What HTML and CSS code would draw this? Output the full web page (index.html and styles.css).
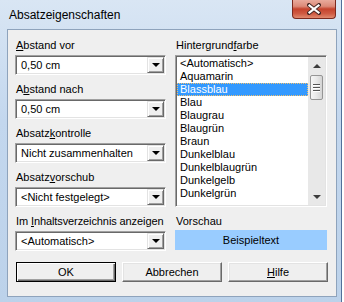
FILE: index.html
```html
<!DOCTYPE html>
<html lang="de">
<head>
    <meta charset="UTF-8">
    <title>Absatzeigenschaften</title>
    <link rel="stylesheet" href="styles.css">
</head>
<body>
    <div class="window">
        <div class="titlebar">
            <span class="title">Absatzeigenschaften</span>
            <div class="close-btn">
                <svg width="14" height="12" viewBox="0 0 14 12">
                    <path d="M2 2 L12 10 M12 2 L2 10" stroke="#4a2a26" stroke-width="4" stroke-linecap="square"/>
                    <path d="M2.5 2.5 L11.5 9.5 M11.5 2.5 L2.5 9.5" stroke="#fff" stroke-width="2.2" stroke-linecap="square"/>
                </svg>
            </div>
        </div>
        <div class="client">
            <div class="columns">
                <div class="col">
                    <div class="field">
                        <label><u>A</u>bstand vor</label>
                        <div class="combo"><span class="combo-value">0,50 cm</span><span class="combo-btn"><i class="arrow"></i></span></div>
                    </div>
                    <div class="field">
                        <label>A<u>b</u>stand nach</label>
                        <div class="combo"><span class="combo-value">0,50 cm</span><span class="combo-btn"><i class="arrow"></i></span></div>
                    </div>
                    <div class="field">
                        <label>Absatz<u>k</u>ontrolle</label>
                        <div class="combo"><span class="combo-value">Nicht zusammenhalten</span><span class="combo-btn"><i class="arrow"></i></span></div>
                    </div>
                    <div class="field">
                        <label>Absatz<u>v</u>orschub</label>
                        <div class="combo"><span class="combo-value">&lt;Nicht festgelegt&gt;</span><span class="combo-btn"><i class="arrow"></i></span></div>
                    </div>
                    <div class="field">
                        <label class="narrow">Im <u>I</u>nhaltsverzeichnis anzeigen</label>
                        <div class="combo"><span class="combo-value">&lt;Automatisch&gt;</span><span class="combo-btn"><i class="arrow"></i></span></div>
                    </div>
                </div>
                <div class="col">
                    <div class="field">
                        <label>Hintergrund<u>f</u>arbe</label>
                        <div class="listbox">
                            <ul class="items">
                                <li>&lt;Automatisch&gt;</li>
                                <li>Aquamarin</li>
                                <li class="selected">Blassblau</li>
                                <li>Blau</li>
                                <li>Blaugrau</li>
                                <li>Blaugrün</li>
                                <li>Braun</li>
                                <li>Dunkelblau</li>
                                <li>Dunkelblaugrün</li>
                                <li>Dunkelgelb</li>
                                <li>Dunkelgrün</li>
                            </ul>
                            <div class="scrollbar">
                                <div class="scroll-arrow"><i class="arrow up"></i></div>
                                <div class="track">
                                    <div class="thumb"><span></span><span></span><span></span></div>
                                </div>
                                <div class="scroll-arrow"><i class="arrow small"></i></div>
                            </div>
                        </div>
                    </div>
                    <div class="field">
                        <label class="tight">Vorschau</label>
                        <div class="preview">Beispieltext</div>
                    </div>
                </div>
            </div>
            <div class="buttons">
                <div class="btn default">OK</div>
                <div class="btn">Abbrechen</div>
                <div class="btn"><u>H</u>ilfe</div>
            </div>
        </div>
    </div>
</body>
</html>
```

FILE: styles.css
```css
html, body {
    margin: 0;
    padding: 0;
    background: #ffffff;
}
body {
    font-family: "Liberation Sans", Arial, sans-serif;
    font-size: 11px;
    color: #000;
}
.window {
    width: 342px;
    height: 302px;
    box-sizing: border-box;
    padding: 0 4px 5px 7px;
    background: linear-gradient(180deg, #d9e6f4 0%, #c3d7ee 40%, #bcd2ea 100%);
    border-right: 1px solid #52709a;
    display: flex;
    flex-direction: column;
}
.titlebar {
    height: 29px;
    display: flex;
    align-items: flex-start;
    margin-left: -7px;
    padding-left: 9px;
}
.title {
    font-size: 12px;
    line-height: 12px;
    margin-top: 9px;
}
.close-btn {
    margin-left: auto;
    margin-right: 1px;
    width: 44px;
    height: 19px;
    box-sizing: border-box;
    border: 1px solid #7b2a1f;
    border-top: none;
    border-radius: 0 0 4px 4px;
    background: linear-gradient(180deg, #e9aa9c 0%, #dc8a78 35%, #c5432d 50%, #cf5a42 75%, #e08a6f 100%);
    display: flex;
    align-items: center;
    justify-content: center;
}
.close-btn svg {
    display: block;
}
.client {
    flex: 1;
    background: #efefef;
    border: 1px solid #8ea3bc;
    padding: 8px 8px 0 7px;
    display: flex;
    flex-direction: column;
}
.columns {
    display: flex;
    gap: 9px;
}
.col {
    width: 151px;
}
.col + .col {
    width: 152px;
}
.field {
    margin-bottom: 7px;
}
.field:last-child {
    margin-bottom: 0;
}
label {
    display: block;
    height: 14px;
    line-height: 14px;
    padding-left: 1px;
    margin-bottom: 3px;
    white-space: nowrap;
}
label.narrow {
    letter-spacing: -0.1px;
}
label.tight {
    margin-bottom: 2px;
}
.combo {
    height: 20px;
    box-sizing: border-box;
    background: #fff;
    border: 1px solid;
    border-color: #a0a0a0 #ffffff #ffffff #a0a0a0;
    box-shadow: inset 1px 1px #696969, inset -1px -1px #e3e3e3;
    display: flex;
    align-items: center;
    padding: 1px;
}
.combo-value {
    flex: 1;
    padding-left: 4px;
    line-height: 16px;
    white-space: nowrap;
}
.combo-btn {
    width: 17px;
    height: 16px;
    box-sizing: border-box;
    background: #efefef;
    border: 1px solid;
    border-color: #e3e3e3 #696969 #696969 #e3e3e3;
    box-shadow: inset 1px 1px #fff, inset -1px -1px #a0a0a0;
    display: flex;
    align-items: center;
    justify-content: center;
}
.arrow {
    display: block;
    width: 0;
    height: 0;
    border-left: 4px solid transparent;
    border-right: 4px solid transparent;
    border-top: 4px solid #000;
}
.arrow.up {
    border-top: none;
    border-bottom: 4px solid #3c3c3c;
}
.arrow.small {
    border-top-color: #3c3c3c;
}
.listbox {
    height: 152px;
    box-sizing: border-box;
    background: #fff;
    border: 1px solid;
    border-color: #a0a0a0 #ffffff #ffffff #a0a0a0;
    box-shadow: inset 1px 1px #696969, inset -1px -1px #e3e3e3;
    padding: 1px;
    display: flex;
}
.items {
    flex: 1;
    list-style: none;
    margin: 0;
    padding: 0;
    overflow: hidden;
}
.items li {
    height: 13px;
    line-height: 13px;
    padding-left: 3px;
    white-space: nowrap;
}
.items li.selected {
    background: #3399ff;
    color: #fff;
    outline: 1px dotted #f0c070;
    outline-offset: -1px;
}
.scrollbar {
    width: 17px;
    background: #e8e8e8;
    display: flex;
    flex-direction: column;
}
.scroll-arrow {
    height: 17px;
    display: flex;
    align-items: center;
    justify-content: center;
}
.track {
    flex: 1;
    padding-top: 1px;
}
.thumb {
    width: 13px;
    height: 25px;
    margin-left: 2px;
    box-sizing: border-box;
    border: 1px solid #959595;
    border-radius: 2px;
    background: linear-gradient(90deg, #f6f6f6 0%, #e8e8e8 50%, #d4d4d4 100%);
    display: flex;
    flex-direction: column;
    align-items: center;
    justify-content: center;
    gap: 1px;
}
.thumb span {
    display: block;
    width: 7px;
    height: 1px;
    background: #555;
    border-bottom: 1px solid #fff;
}
.preview {
    height: 20px;
    line-height: 20px;
    background: #99ccff;
    text-align: center;
}
.buttons {
    display: flex;
    gap: 6px;
    margin-top: 11px;
    padding-left: 1px;
}
.btn {
    width: 100px;
    height: 20px;
    box-sizing: border-box;
    background: #efefef;
    border: 1px solid;
    border-color: #ffffff #696969 #696969 #ffffff;
    box-shadow: inset -1px -1px #a0a0a0, inset 1px 1px #e3e3e3;
    text-align: center;
    line-height: 18px;
}
.btn.default {
    border-color: #000;
    box-shadow: inset 1px 1px #fff, inset -1px -1px #696969, inset -2px -2px #a0a0a0;
}
```
